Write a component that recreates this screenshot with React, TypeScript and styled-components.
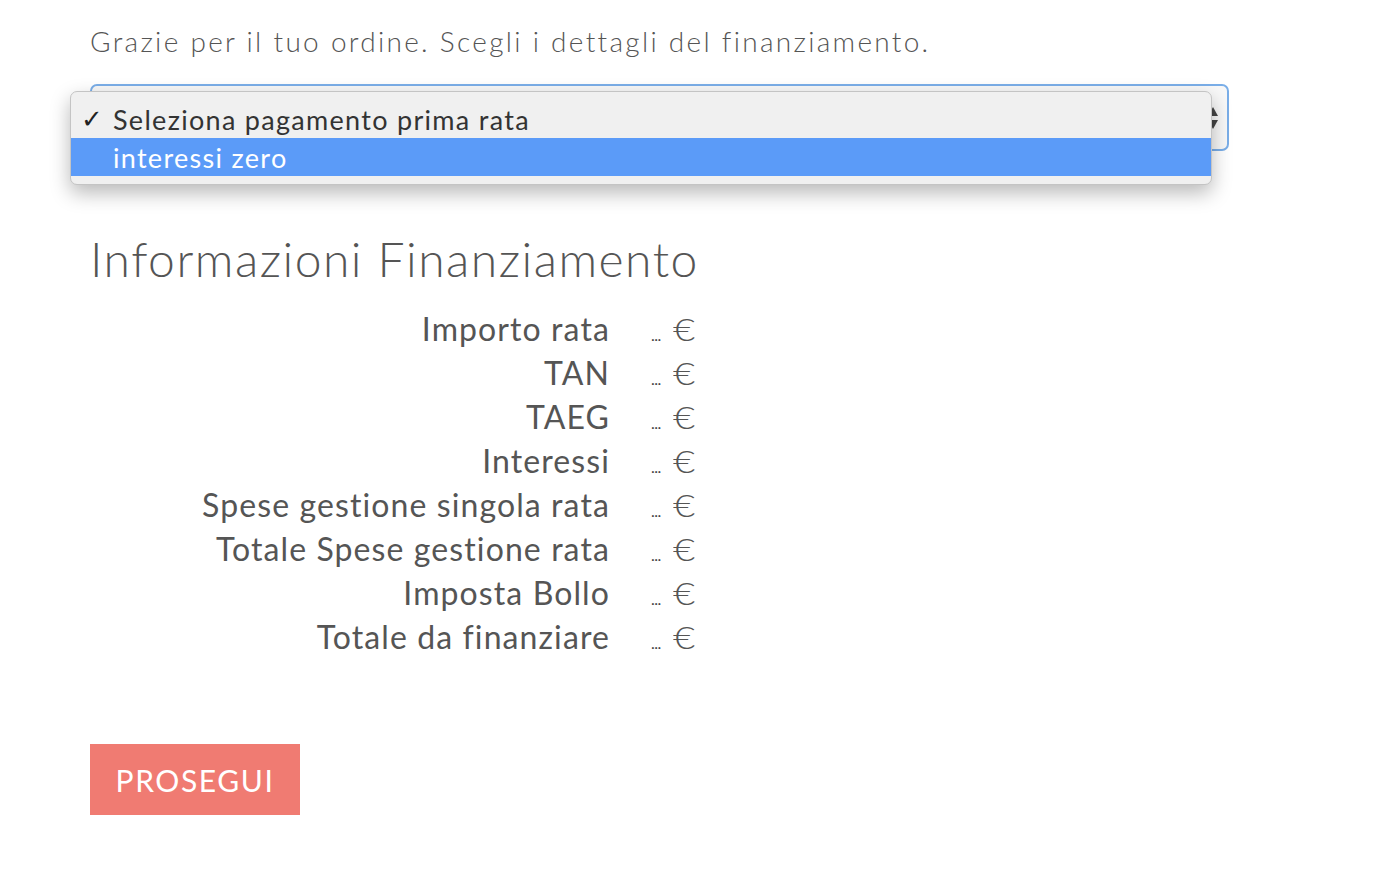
import styled, { createGlobalStyle } from "styled-components";

const GlobalStyle = createGlobalStyle`
  body {
    margin: 0;
    background: #ffffff;
    font-family: Lato, "Open Sans", sans-serif;
    color: #555555;
  }
`;

const rows = [
  "Importo rata",
  "TAN",
  "TAEG",
  "Interessi",
  "Spese gestione singola rata",
  "Totale Spese gestione rata",
  "Imposta Bollo",
  "Totale da finanziare",
];

const App = () => {
  return (
    <Page>
      <GlobalStyle />
      <Intro>Grazie per il tuo ordine. Scegli i dettagli del finanziamento.</Intro>
      <SelectWrap>
        <SelectBox>
          <Arrows>
            <svg width="12" height="26" viewBox="0 0 12 26">
              <path d="M6 2 L11 11 L1 11 Z" fill="#444" />
              <path d="M1 15 L11 15 L6 24 Z" fill="#444" />
            </svg>
          </Arrows>
        </SelectBox>
        <Menu>
          <Option>
            <Check>✓</Check>
            Seleziona pagamento prima rata
          </Option>
          <Option $active>
            <Check />
            interessi zero
          </Option>
        </Menu>
      </SelectWrap>
      <Heading>Informazioni Finanziamento</Heading>
      <InfoTable>
        {rows.map((r) => (
          <InfoRow key={r}>
            <Label>{r}</Label>
            <Value>
              <Dots>...</Dots>
              <Euro>€</Euro>
            </Value>
          </InfoRow>
        ))}
      </InfoTable>
      <Button>PROSEGUI</Button>
    </Page>
  );
};

const Page = styled.div`
  padding: 20px 90px 60px;
  display: flex;
  flex-direction: column;
  align-items: flex-start;
`;

const Intro = styled.p`
  margin: 0;
  font-size: 28px;
  font-weight: 300;
  letter-spacing: 2.3px;
  line-height: 42px;
  color: #555;
`;

const SelectWrap = styled.div`
  position: relative;
  margin-top: 22px;
  width: 1139px;
`;

const SelectBox = styled.div`
  height: 63px;
  border: 2px solid #7aaee8;
  border-radius: 7px;
  background: #f8f8f8;
  display: flex;
  justify-content: flex-end;
  align-items: center;
  padding-right: 8px;
`;

const Arrows = styled.div`
  display: flex;
  align-items: center;
`;

const Menu = styled.div`
  position: absolute;
  left: -20px;
  top: 7px;
  width: 1140px;
  background: #f0f0f0;
  border: 1px solid #c4c4c4;
  border-radius: 7px;
  box-shadow: 0 8px 20px rgba(0, 0, 0, 0.28);
  padding: 8px 0 8px;
`;

const Option = styled.div<{ $active?: boolean }>`
  display: flex;
  align-items: center;
  height: 38px;
  font-size: 27px;
  font-weight: 400;
  letter-spacing: 1.3px;
  color: ${(p) => (p.$active ? "#ffffff" : "#333333")};
  background: ${(p) => (p.$active ? "#5b9bf8" : "transparent")};
`;

const Check = styled.span`
  width: 42px;
  padding-left: 10px;
  box-sizing: border-box;
  font-size: 26px;
  font-weight: 700;
  font-family: "DejaVu Sans", sans-serif;
  color: #222;
`;

const Heading = styled.h2`
  margin: 80px 0 0;
  font-size: 48px;
  font-weight: 300;
  letter-spacing: 1.5px;
  line-height: 56px;
  color: #555;
`;

const InfoTable = styled.div`
  margin-top: 19px;
  display: flex;
  flex-direction: column;
`;

const InfoRow = styled.div`
  display: grid;
  grid-template-columns: 520px auto;
  column-gap: 41px;
  height: 44px;
  align-items: center;
  font-size: 32px;
  color: #555;
`;

const Label = styled.span`
  text-align: right;
  font-weight: 400;
  letter-spacing: 1.1px;
`;

const Value = styled.span`
  display: flex;
  align-items: baseline;
  gap: 12px;
  font-weight: 300;
`;

const Dots = styled.span`
  font-size: 16px;
  font-weight: 400;
  letter-spacing: -0.5px;
  color: #444;
`;

const Euro = styled.span`
  font-size: 32px;
  font-weight: 300;
  transform: scaleX(1.2);
  transform-origin: left;
`;

const Button = styled.button`
  margin-top: 86px;
  width: 210px;
  height: 71px;
  background: #f07b72;
  border: none;
  color: #fff;
  font-family: Lato, sans-serif;
  font-size: 30px;
  font-weight: 400;
  letter-spacing: 1.6px;
  padding: 0;
`;

export default App;
